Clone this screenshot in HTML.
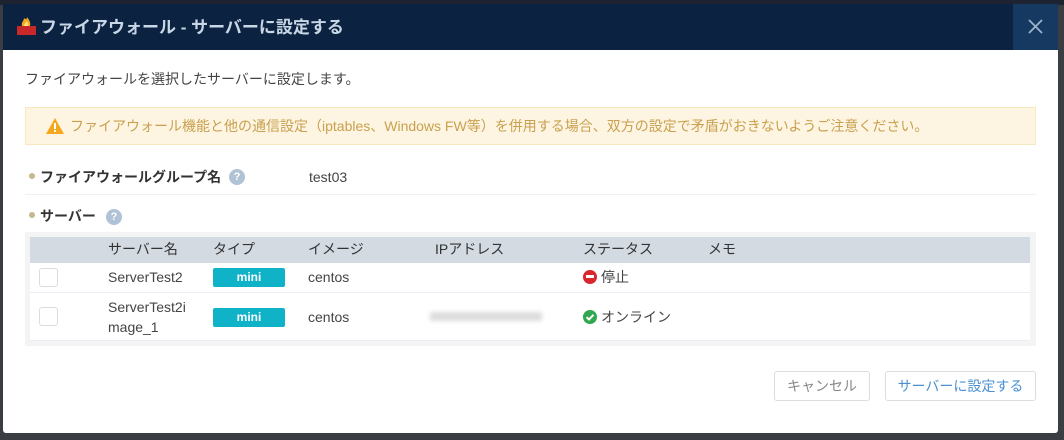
<!DOCTYPE html>
<html><head><meta charset="utf-8"><style>
*{box-sizing:border-box;margin:0;padding:0}
body{width:1064px;height:440px;background:#3a3d42;font-family:"Liberation Sans","Noto Sans CJK JP",sans-serif;position:relative;overflow:hidden;font-size:14px;color:#333}
.top{position:absolute;left:0;top:0;width:1064px;height:5px;background:#1d2330}
.dlg{position:absolute;left:3px;top:4px;width:1055px;height:429px;background:#fff;border-radius:0 0 3px 3px;overflow:hidden}
.hd{position:absolute;left:0;top:0;width:1055px;height:46px;background:#0b2240}
.hd .t{position:absolute;left:37px;top:2px;line-height:44px;font-size:17px;color:#c8d6e6;font-weight:bold}
.x{position:absolute;right:0;top:0;width:45px;height:46px;background:#163962}
.abs{position:absolute;white-space:nowrap;line-height:20px}
.warn{position:absolute;left:22px;top:103px;width:1011px;height:38px;background:#fdf5e1;border:1px solid #f8e8c0;color:#c9a050;font-size:14px;line-height:36px;padding-left:44px;white-space:nowrap}
.dot{display:inline-block;width:6px;height:6px;border-radius:3px;background:#c4b88e;margin-right:5px;vertical-align:3px}
.q{position:absolute;width:16px;height:16px;border-radius:8px;background:#b0c2d6;color:#fff;font-size:11px;font-weight:bold;text-align:center;line-height:16px}
.tbl{position:absolute;left:22px;top:228px;width:1011px;height:114px;background:#f4f4f4}
.th{position:absolute;left:5px;top:5px;width:1000px;height:26px;background:#d3dae2}
.r{position:absolute;left:5px;width:1000px;background:#fff;border-bottom:1px solid #e8eef4}
.cb{position:absolute;left:9px;width:19px;height:19px;border:1px solid #dcdcdc;border-radius:3px;background:#fff}
.mini{position:absolute;left:183px;width:72px;height:19px;background:#0fb2c6;color:#fff;font-weight:bold;font-size:12px;text-align:center;line-height:19px;border-radius:2px}
.btn{position:absolute;top:367px;height:30px;border:1px solid #ddd;border-radius:3px;background:#fff;text-align:center;line-height:28px;font-size:14px}
.ic{display:inline-block;width:14px;height:14px;border-radius:7px;vertical-align:middle;position:relative;margin-right:4px;top:-1px}
</style></head><body>
<div class="top"></div>
<div class="dlg">
<div class="hd">
<svg style="position:absolute;left:13px;top:12px" width="21" height="20" viewBox="0 0 21 20"><path d="M6 10 C5 6 8 5 8 2 C10 4 11 3 11 1 C13 4 15 6 14 10Z" fill="#f6a623"/><path d="M8 10 C8 8 10 7 10 5 C12 7 13 8 12 10Z" fill="#ffe070"/><rect x="1" y="10" width="19" height="9" fill="#c8282a"/></svg>
<div class="t">ファイアウォール - サーバーに設定する</div>
<div class="x"><svg width="45" height="46" viewBox="0 0 45 46"><path d="M16 16 L29 29 M29 16 L16 29" stroke="#9fb3c9" stroke-width="1.8"/></svg></div>
</div>
<div class="abs" style="left:22px;top:65px;color:#444">ファイアウォールを選択したサーバーに設定します。</div>
<div class="warn"><svg style="position:absolute;left:20px;top:10px" width="18" height="16" viewBox="0 0 18 16"><path d="M9 0 L18 16 H0Z" fill="#f5a81e"/><rect x="8" y="5" width="2" height="6" fill="#fff"/><rect x="8" y="12" width="2" height="2" fill="#fff"/></svg>ファイアウォール機能と他の通信設定（iptables、Windows FW等）を併用する場合、双方の設定で矛盾がおきないようご注意ください。</div>
<div class="abs" style="left:26px;top:163px;font-weight:bold"><span class="dot"></span>ファイアウォールグループ名</div>
<div class="q" style="left:226px;top:165px">?</div>
<div class="abs" style="left:306px;top:163px;color:#444">test03</div>
<div style="position:absolute;left:22px;top:190px;width:1011px;height:1px;background:#f0f0f0"></div>
<div class="abs" style="left:26px;top:202px;font-weight:bold"><span class="dot"></span>サーバー</div>
<div class="q" style="left:103px;top:205px">?</div>
<div class="tbl">
<div class="th">
<div class="abs" style="left:78px;top:2px">サーバー名</div>
<div class="abs" style="left:183px;top:2px">タイプ</div>
<div class="abs" style="left:278px;top:2px">イメージ</div>
<div class="abs" style="left:405px;top:2px">IPアドレス</div>
<div class="abs" style="left:553px;top:2px">ステータス</div>
<div class="abs" style="left:678px;top:2px">メモ</div>
</div>
<div class="r" style="top:31px;height:30px">
<div class="cb" style="top:5px"></div>
<div class="abs" style="left:78px;top:4px;color:#444">ServerTest2</div>
<div class="mini" style="top:5px">mini</div>
<div class="abs" style="left:278px;top:4px;color:#444">centos</div>
<div class="abs" style="left:553px;top:4px;color:#444"><span class="ic" style="background:#d9272e"><span style="position:absolute;left:3px;top:5px;width:8px;height:3px;background:#fff"></span></span>停止</div>
</div>
<div class="r" style="top:61px;height:48px">
<div class="cb" style="top:14px"></div>
<div class="abs" style="left:78px;top:4px;color:#444;line-height:20px">ServerTest2i<br>mage_1</div>
<div class="mini" style="top:15px">mini</div>
<div class="abs" style="left:278px;top:14px;color:#444">centos</div>
<div style="position:absolute;left:400px;top:19px;width:112px;height:9px;background:#ddd;filter:blur(2px)"></div>
<div class="abs" style="left:553px;top:14px;color:#444"><span class="ic" style="background:#2fa84f"><svg style="position:absolute;left:0;top:0" width="14" height="14" viewBox="0 0 14 14"><path d="M3.5 7.2 L6 9.5 L10.5 4.8" stroke="#fff" stroke-width="2" fill="none"/></svg></span>オンライン</div>
</div>
</div>
<div class="btn" style="left:771px;width:96px;color:#888">キャンセル</div>
<div class="btn" style="left:882px;width:151px;color:#4a90d0">サーバーに設定する</div>
</div>
</body></html>
